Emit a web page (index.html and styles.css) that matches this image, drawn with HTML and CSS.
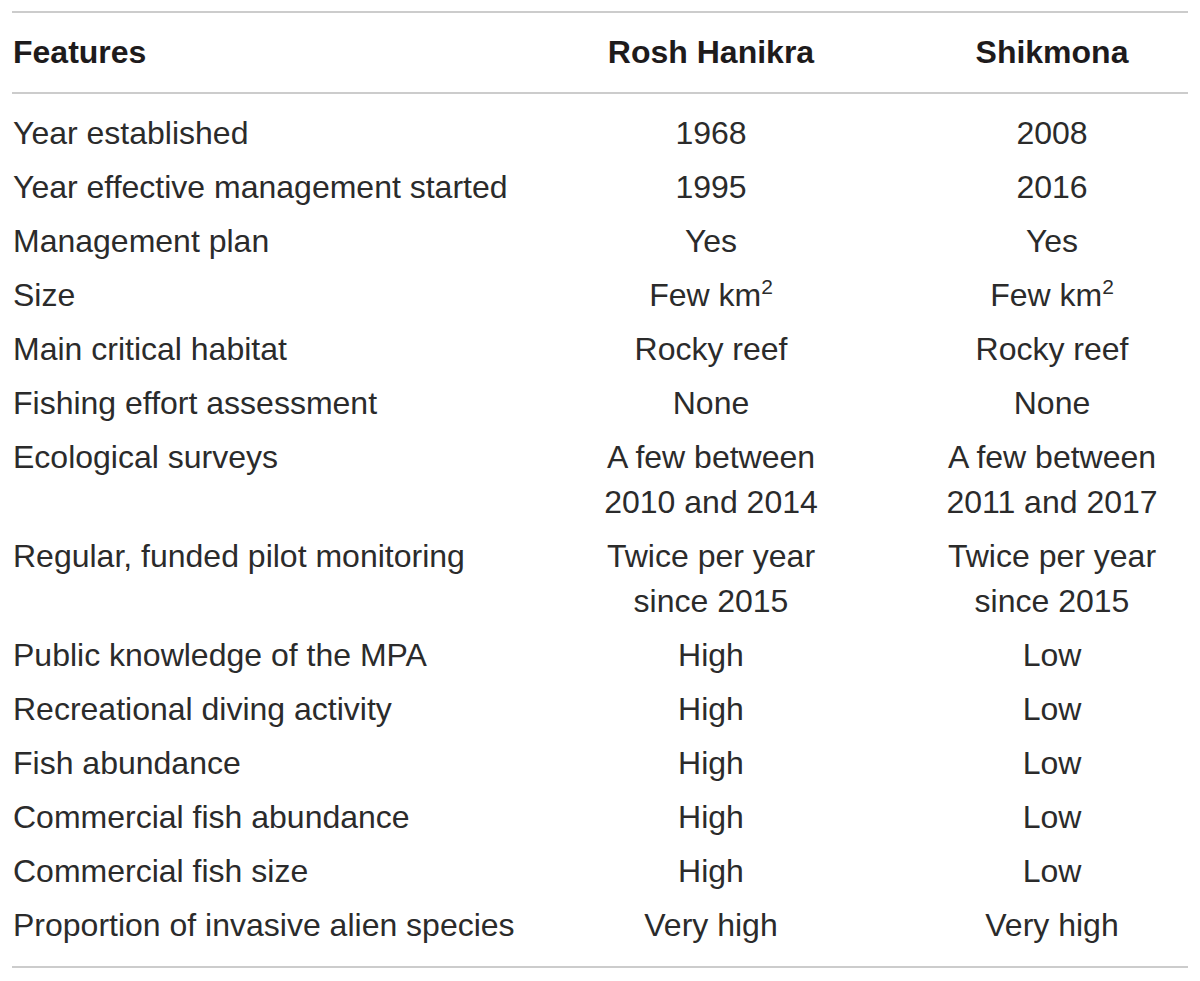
FILE: index.html
```html
<!DOCTYPE html>
<html lang="en">
<head>
    <meta charset="UTF-8">
    <meta name="viewport" content="width=device-width, initial-scale=1.0">
    <title>MPA features</title>
    <link rel="stylesheet" href="styles.css">
</head>
<body>
    <div class="wrap">
        <table class="features">
            <colgroup>
                <col class="col-name">
                <col class="col-site">
                <col class="col-site2">
            </colgroup>
            <thead>
                <tr>
                    <th class="name">Features</th>
                    <th>Rosh Hanikra</th>
                    <th>Shikmona</th>
                </tr>
            </thead>
            <tbody>
                <tr><td class="name">Year established</td><td>1968</td><td>2008</td></tr>
                <tr><td class="name">Year effective management started</td><td>1995</td><td>2016</td></tr>
                <tr><td class="name">Management plan</td><td>Yes</td><td>Yes</td></tr>
                <tr><td class="name">Size</td><td>Few km<sup>2</sup></td><td>Few km<sup>2</sup></td></tr>
                <tr><td class="name">Main critical habitat</td><td>Rocky reef</td><td>Rocky reef</td></tr>
                <tr><td class="name">Fishing effort assessment</td><td>None</td><td>None</td></tr>
                <tr><td class="name">Ecological surveys</td><td>A few between<br>2010 and 2014</td><td>A few between<br>2011 and 2017</td></tr>
                <tr><td class="name">Regular, funded pilot monitoring</td><td>Twice per year<br>since 2015</td><td>Twice per year<br>since 2015</td></tr>
                <tr><td class="name">Public knowledge of the MPA</td><td>High</td><td>Low</td></tr>
                <tr><td class="name">Recreational diving activity</td><td>High</td><td>Low</td></tr>
                <tr><td class="name">Fish abundance</td><td>High</td><td>Low</td></tr>
                <tr><td class="name">Commercial fish abundance</td><td>High</td><td>Low</td></tr>
                <tr><td class="name">Commercial fish size</td><td>High</td><td>Low</td></tr>
                <tr><td class="name">Proportion of invasive alien species</td><td>Very high</td><td>Very high</td></tr>
            </tbody>
        </table>
    </div>
</body>
</html>
```

FILE: styles.css
```css
body {
    margin: 0;
    background: #ffffff;
    font-family: "Liberation Sans", Arial, sans-serif;
    color: #2b2b2b;
}
.wrap {
    padding: 11px 12px 0 12px;
}
.features {
    width: 1176px;
    border-collapse: collapse;
    table-layout: fixed;
    font-size: 32px;
    line-height: 45px;
}
.col-name {
    width: 494px;
}
.col-site {
    width: 410px;
}
.col-site2 {
    width: 272px;
}
.features thead tr {
    border-top: 2px solid #cccccc;
    border-bottom: 2px solid #cccccc;
}
.features th {
    font-weight: bold;
    color: #1e1b1c;
    text-align: center;
    padding: 17px 0;
}
.features td {
    text-align: center;
    vertical-align: top;
    padding: 4px 0 5px 0;
    font-weight: normal;
    white-space: nowrap;
}
.features .name {
    text-align: left;
    padding-left: 1px;
}
.features tbody tr:first-child td {
    padding-top: 17px;
}
.features tbody tr:last-child td {
    padding-bottom: 18px;
}
.features tbody tr:last-child {
    border-bottom: 2px solid #cccccc;
}
sup {
    font-size: 21px;
    line-height: 0;
    vertical-align: 12px;
}
```
